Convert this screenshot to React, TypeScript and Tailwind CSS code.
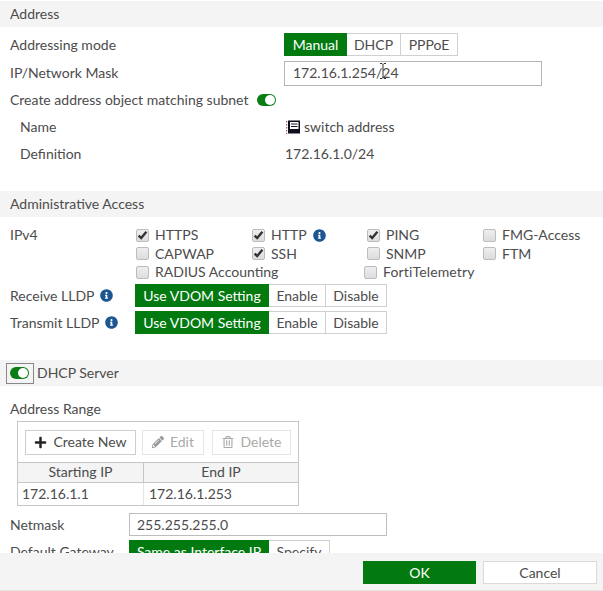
import type { ReactNode } from "react";
import { FaInfoCircle, FaPencilAlt, FaPlus, FaRegTrashAlt } from "react-icons/fa";

function SectionHeader({ children, className = "" }: { children: ReactNode; className?: string }) {
  return (
    <div className={`flex h-[26px] shrink-0 items-center bg-[#f4f4f4] ${className}`}>{children}</div>
  );
}

function Toggle() {
  return (
    <span className="flex h-[12px] w-[19px] items-center justify-end rounded-full bg-[#0a7d14] p-[1px]">
      <span className="size-[10px] rounded-full bg-white" />
    </span>
  );
}

function Info({ className = "" }: { className?: string }) {
  return <FaInfoCircle className={`size-[13px] text-[#1d5792] ${className}`} />;
}

function Check({ label, checked = false, info = false, className = "" }: { label: string; checked?: boolean; info?: boolean; className?: string }) {
  return (
    <label className={`flex items-center ${className}`}>
      <span className="flex size-[13px] shrink-0 items-center justify-center rounded-[2px] border border-[#bcbcbc] bg-gradient-to-b from-[#eeeeee] to-[#dddddd]">
        {checked && (
          <svg viewBox="0 0 11 11" className="size-[11px]">
            <path d="M1.6 5.6 4.2 8 9.4 1.8" fill="none" stroke="#333" strokeWidth="2.4" />
          </svg>
        )}
      </span>
      <span className="ml-[6px]">{label}</span>
      {info && <Info className="ml-[6px]" />}
    </label>
  );
}

function Segments({ items, widths }: { items: string[]; widths: string[] }) {
  return (
    <div className="flex h-[23px]">
      {items.map((item, i) => (
        <button
          key={item}
          className={`flex h-[23px] items-center justify-center ${widths[i]} ${
            i === 0 ? "bg-[#037a10] text-white" : "border-y border-r border-[#d0d0d0] bg-white"
          }`}
        >
          {item}
        </button>
      ))}
    </div>
  );
}

const lldpWidths = ["w-[134px]", "w-[57px]", "w-[61px]"];

export default function App() {
  return (
    <div className="flex h-[591px] w-[603px] flex-col overflow-hidden bg-white font-['Lato','Liberation_Sans',sans-serif] text-[14px] leading-[18px] whitespace-nowrap text-[#4c4c4c]">
      <main className="flex h-[553px] shrink-0 flex-col overflow-hidden pt-px">
        <SectionHeader className="pl-[10px]">Address</SectionHeader>
        <div className="mt-[6px] flex h-[23px] shrink-0 items-center pl-[10px]">
          <span className="w-[274px]">Addressing mode</span>
          <Segments items={["Manual", "DHCP", "PPPoE"]} widths={["w-[63px]", "w-[54px]", "w-[57px]"]} />
        </div>
        <div className="mt-[5px] flex h-[25px] shrink-0 items-center pl-[10px]">
          <span className="w-[274px] pb-[2px]">IP/Network Mask</span>
          <div className="relative flex h-[25px] w-[258px] items-center border border-[#b5b5b5] pb-px pl-[8px]">
            172.16.1.254/24
            <svg viewBox="0 0 8 16" className="absolute top-[1px] left-[94px] h-[16px] w-[8px]">
              <path d="M1 .5h2L4 1.5 5 .5h2M4 1.5v13M1 15.5h2l1-1 1 1h2" fill="none" stroke="#333" />
            </svg>
          </div>
        </div>
        <div className="flex h-[28px] shrink-0 items-center gap-[9px] pl-[10px]">
          <span>Create address object matching subnet</span>
          <Toggle />
        </div>
        <div className="flex h-[26px] shrink-0 items-center pl-[20px]">
          <span className="w-[266px]">Name</span>
          <svg viewBox="0 0 14 14" className="mr-[4px] size-[14px]">
            <path d="M2 .5h12v13H2z" fill="#100d20" />
            <path d="M4 2h8.5v7H4z" fill="#fff" />
            <path d="M5 4h6.5M5 6.5h6.5" stroke="#171326" />
            <path d="M.7 1v13" stroke="#8c3c50" strokeDasharray="1.5 1.5" />
          </svg>
          <span>switch address</span>
        </div>
        <div className="flex h-[27px] shrink-0 items-center pl-[20px]">
          <span className="w-[265px]">Definition</span>
          <span>172.16.1.0/24</span>
        </div>

        <SectionHeader className="mt-[24px] pl-[10px]">Administrative Access</SectionHeader>
        <div className="mt-[9px] flex h-[56px] shrink-0 pl-[10px]">
          <span className="w-[126px]">IPv4</span>
          <div className="flex flex-col">
            <div className="flex h-[18px] items-center">
              <Check label="HTTPS" checked className="w-[116px]" />
              <Check label="HTTP" checked info className="w-[115px]" />
              <Check label="PING" checked className="w-[116px]" />
              <Check label="FMG-Access" />
            </div>
            <div className="flex h-[19px] items-center">
              <Check label="CAPWAP" className="w-[116px]" />
              <Check label="SSH" checked className="w-[115px]" />
              <Check label="SNMP" className="w-[116px]" />
              <Check label="FTM" />
            </div>
            <div className="flex h-[18px] items-center">
              <Check label="RADIUS Accounting" className="w-[228px]" />
              <Check label="FortiTelemetry" className="tracking-[0.15px]" />
            </div>
          </div>
        </div>
        <div className="mt-[2px] flex h-[23px] shrink-0 items-center pl-[10px]">
          <span className="flex w-[125px] items-center gap-[6px]">Receive LLDP <Info /></span>
          <Segments items={["Use VDOM Setting", "Enable", "Disable"]} widths={lldpWidths} />
        </div>
        <div className="mt-[4px] flex h-[23px] shrink-0 items-center pl-[10px]">
          <span className="flex w-[125px] items-center gap-[6px]">Transmit LLDP <Info /></span>
          <Segments items={["Use VDOM Setting", "Enable", "Disable"]} widths={lldpWidths} />
        </div>

        <SectionHeader className="mt-[26px] pl-[6px]">
          <span className="flex h-[21px] w-[28px] items-center justify-center border border-[#888] pr-px">
            <Toggle />
          </span>
          <span className="ml-[3px]">DHCP Server</span>
        </SectionHeader>
        <div className="mt-[14px] h-[21px] shrink-0 pl-[10px]">Address Range</div>
        <section className="ml-[17px] flex h-[85px] w-[282px] shrink-0 flex-col border border-[#c6c6c6]">
          <div className="flex h-[40px] shrink-0 items-center pl-[7px]">
            <button className="flex h-[25px] w-[111px] items-center justify-center gap-[6px] border border-[#cecece]">
              <FaPlus className="size-[13px] text-[#222]" />Create New
            </button>
            <button className="ml-[6px] flex h-[25px] w-[62px] items-center justify-center gap-[6px] border border-[#e5e5e5] text-[#aaa]">
              <FaPencilAlt className="size-[12px] text-[#999]" />Edit
            </button>
            <button className="ml-[8px] flex h-[25px] w-[79px] items-center justify-center gap-[7px] border border-[#e5e5e5] text-[#aaa]">
              <FaRegTrashAlt className="size-[12px]" />Delete
            </button>
          </div>
          <div className="flex h-[21px] shrink-0 border-y border-[#c6c6c6] bg-[#f4f4f4]">
            <span className="w-[126px] border-r border-[#c6c6c6] text-center">Starting IP</span>
            <span className="flex-1 text-center">End IP</span>
          </div>
          <div className="flex flex-1 items-center">
            <span className="flex h-full w-[126px] items-center border-r border-[#e5e5e5] pl-[4px]">172.16.1.1</span>
            <span className="pl-[5px]">172.16.1.253</span>
          </div>
        </section>
        <div className="mt-[7px] flex h-[23px] shrink-0 items-center pl-[10px]">
          <span className="w-[119px]">Netmask</span>
          <div className="flex h-[23px] w-[258px] items-center border border-[#bdbdbd] pl-[7px]">255.255.255.0</div>
        </div>
        <div className="mt-[4px] flex h-[23px] shrink-0 items-center pl-[10px]">
          <span className="w-[119px]">Default Gateway</span>
          <Segments items={["Same as Interface IP", "Specify"]} widths={["w-[140px]", "w-[61px]"]} />
        </div>
      </main>
      <footer className="flex h-[38px] shrink-0 items-start justify-end gap-[7px] border-b border-[#e6e6e6] bg-[#f4f4f4] pt-[8px] pr-[6px]">
        <button className="h-[23px] w-[113px] bg-[#037a10] text-white">OK</button>
        <button className="h-[23px] w-[114px] border border-[#dadada] bg-white">Cancel</button>
      </footer>
    </div>
  );
}
